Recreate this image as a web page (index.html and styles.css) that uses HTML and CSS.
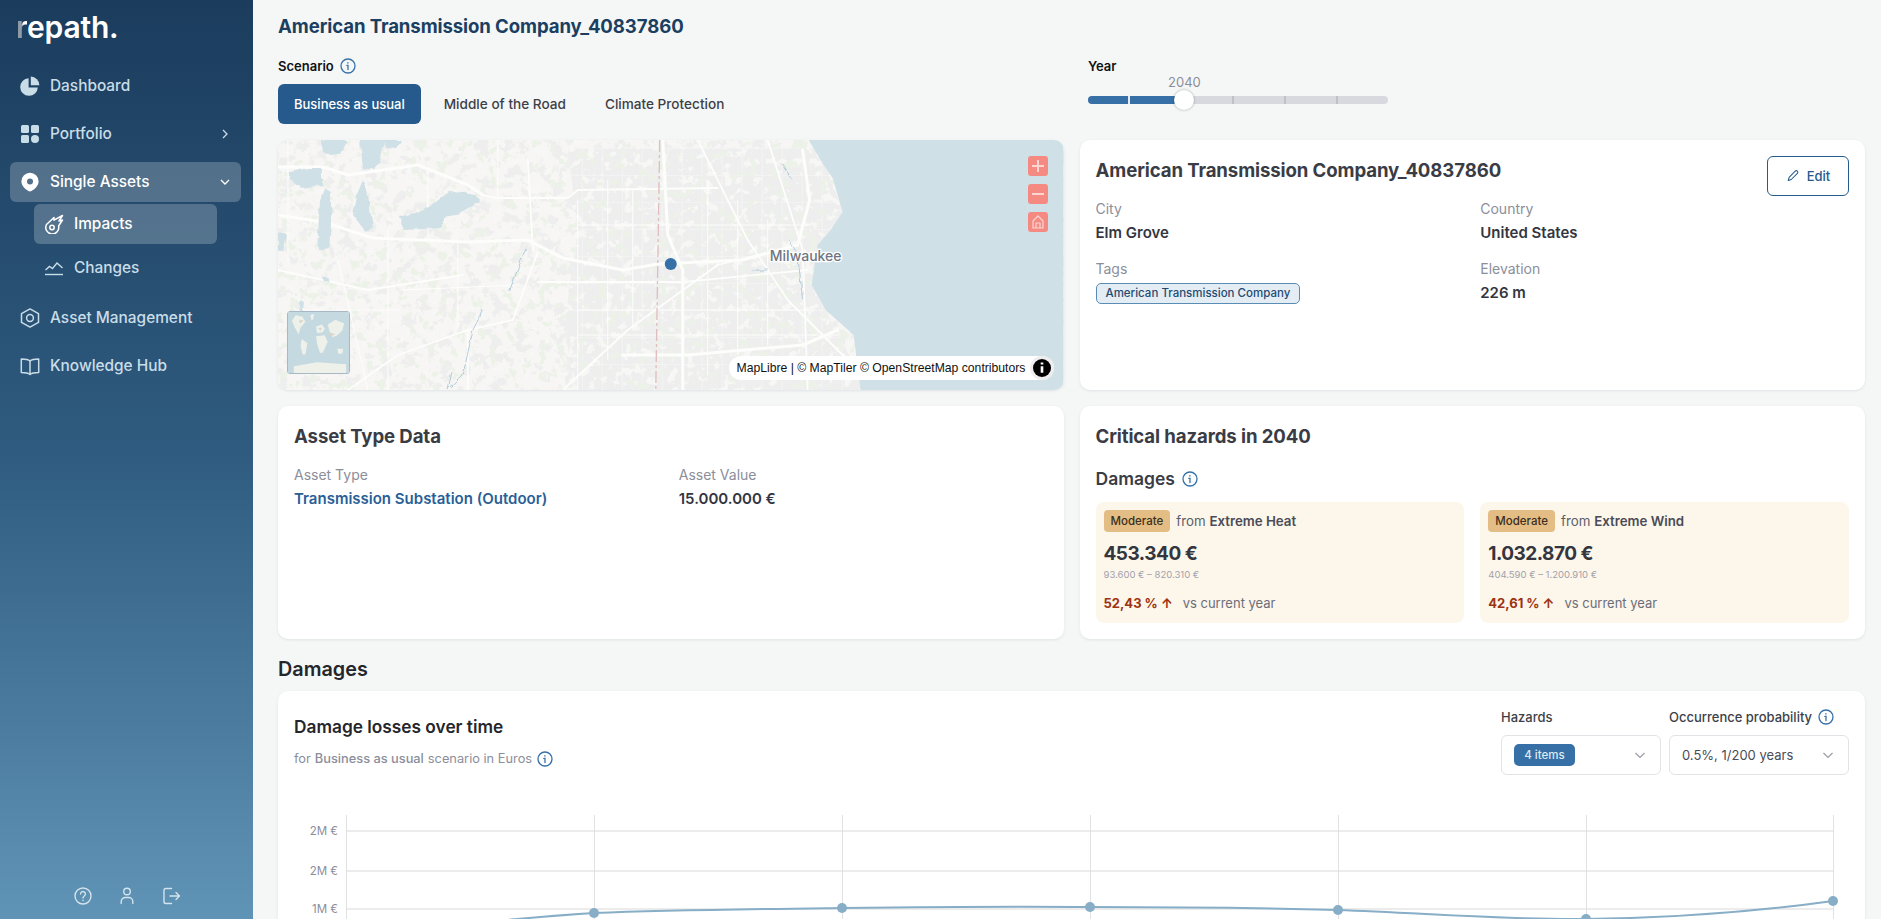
FILE: index.html
```html
<!DOCTYPE html>
<html lang="en">
<head>
<meta charset="utf-8">
<title>repath – Impacts</title>
<link rel="stylesheet" href="styles.css">
</head>
<body>
<aside class="sidebar">
  <div class="logo"><span class="logo-r">r</span>epath.</div>
  <nav class="nav">
    <a class="nav-item">
      <svg class="nav-icon" viewBox="0 0 20 20"><path fill="currentColor" d="M8.600 2.200v9.200h9.200A8.800 8.800 0 1 1 8.600 2.200z"/><path fill="currentColor" d="M10.800.6a8.700 8.700 0 0 1 8.600 8.600h-8.600z"/></svg>
      <span>Dashboard</span>
    </a>
    <a class="nav-item">
      <svg class="nav-icon" viewBox="0 0 20 20"><rect fill="currentColor" x="1" y="1" width="8" height="8" rx="1.500"/><rect fill="currentColor" x="11" y="1" width="8" height="8" rx="1.500"/><rect fill="currentColor" x="1" y="11" width="8" height="8" rx="1.500"/><circle fill="currentColor" cx="15" cy="15" r="4"/></svg>
      <span>Portfolio</span>
      <svg class="nav-chev" viewBox="0 0 12 12"><path d="M4 2l4 4-4 4"/></svg>
    </a>
    <a class="nav-item is-open">
      <svg class="nav-icon" viewBox="0 0 20 20"><path fill="currentColor" fill-rule="evenodd" d="M10 .8a8.600 8.600 0 0 1 8.600 8.600c0 4.600-4.600 8.500-8.600 10.200-4-1.700-8.600-5.600-8.600-10.200A8.600 8.600 0 0 1 10 .8zm0 5.700a3 3 0 1 0 0 6 3 3 0 0 0 0-6z"/></svg>
      <span>Single Assets</span>
      <svg class="nav-chev" viewBox="0 0 12 12"><path d="M2 4l4 4 4-4"/></svg>
    </a>
    <div class="subnav">
      <a class="sub-item is-active">
        <svg class="nav-icon" viewBox="0 0 20 20"><g fill="none" stroke="currentColor" stroke-width="1.500" stroke-linejoin="round"><path d="M2.500 10.500 10 3.500v2.700l8.500-4.700L15 7l3.500-1-3.900 6A6.500 6.500 0 1 1 2.500 10.500z"/><circle cx="8" cy="13.500" r="2.200"/></g></svg>
        <span>Impacts</span>
      </a>
      <a class="sub-item">
        <svg class="nav-icon" viewBox="0 0 20 20"><g fill="none" stroke="currentColor" stroke-width="1.400"><path d="M1.500 12l4-3.500 3 2L13 5l5.500 5"/><path d="M1 16.500h18"/></g></svg>
        <span>Changes</span>
      </a>
    </div>
    <a class="nav-item">
      <svg class="nav-icon" viewBox="0 0 20 20"><g fill="none" stroke="currentColor" stroke-width="1.500" stroke-linejoin="round"><path d="M10 .9l8.500 4.700v8.800L10 19.100l-8.500-4.700V5.600z"/><circle cx="10" cy="10" r="3.400"/></g></svg>
      <span>Asset Management</span>
    </a>
    <a class="nav-item">
      <svg class="nav-icon" viewBox="0 0 20 20"><g fill="none" stroke="currentColor" stroke-width="1.500" stroke-linejoin="round"><path d="M10 5c-1.500-1.500-3.500-2-8.700-2v13.500c5.200 0 7.200.5 8.700 2 1.500-1.500 3.500-2 8.700-2V3C13.500 3 11.500 3.500 10 5z"/><path d="M10 5v13.500"/></g></svg>
      <span>Knowledge Hub</span>
    </a>
  </nav>
  <div class="side-foot">
    <svg class="foot-icon" viewBox="0 0 20 20"><circle cx="10" cy="10" r="8"/><path d="M7.600 8a2.400 2.400 0 1 1 3.700 2c-.9.600-1.300 1-1.300 2"/><path d="M10 14.200v.3"/></svg>
    <svg class="foot-icon" viewBox="0 0 20 20"><circle cx="10" cy="5.500" r="3.300"/><path d="M4.200 17.500v-2a4 4 0 0 1 4-4h3.600a4 4 0 0 1 4 4v2"/></svg>
    <svg class="foot-icon" viewBox="0 0 20 20"><path d="M10.500 2.500H4.800A1.800 1.800 0 0 0 3 4.300v11.400a1.800 1.800 0 0 0 1.800 1.800h5.700M9 10h9.500M15 6.500l3.500 3.500-3.500 3.500"/></svg>
  </div>
</aside>

<main class="main">
  <h1 class="page-title">American Transmission Company_40837860</h1>

  <section class="controls">
    <div class="scenario">
      <div class="ctrl-label">Scenario
        <svg class="info" viewBox="0 0 16 16"><circle cx="8" cy="8" r="7"/><path d="M6.800 7.300H8v4.200"/><path d="M7.900 4.600v.4"/></svg>
      </div>
      <div class="tabs">
        <button class="tab is-active">Business as usual</button>
        <button class="tab">Middle of the Road</button>
        <button class="tab">Climate Protection</button>
      </div>
    </div>
    <div class="year">
      <div class="ctrl-label">Year</div>
      <div class="slider">
        <span class="slider-value">2040</span>
        <div class="track">
          <span class="fill"></span>
          <span class="tick tick-1"></span>
          <span class="tick tick-3"></span>
          <span class="tick tick-4"></span>
          <span class="tick tick-5"></span>
          <span class="thumb"></span>
        </div>
      </div>
    </div>
  </section>

  <section class="grid">
    <div class="card map-card">
      <svg class="map" viewBox="0 0 786 250" preserveAspectRatio="none">
        <defs>
          <filter id="mottleGrey" x="0" y="0" width="100%" height="100%" color-interpolation-filters="sRGB">
            <feTurbulence type="fractalNoise" baseFrequency="0.08" numOctaves="4" seed="7"/>
            <feColorMatrix values="0 0 0 0 0.933  0 0 0 0 0.933  0 0 0 0 0.933  12 0 0 0 -6.300"/>
          </filter>
          <filter id="mottleLight" x="0" y="0" width="100%" height="100%" color-interpolation-filters="sRGB">
            <feTurbulence type="fractalNoise" baseFrequency="0.11" numOctaves="4" seed="33"/>
            <feColorMatrix values="0 0 0 0 0.970  0 0 0 0 0.968  0 0 0 0 0.960  0 0 12 0 -6.900"/>
          </filter>
          <filter id="mottleGreen" x="0" y="0" width="100%" height="100%" color-interpolation-filters="sRGB">
            <feTurbulence type="fractalNoise" baseFrequency="0.1" numOctaves="3" seed="21"/>
            <feColorMatrix values="0 0 0 0 0.925  0 0 0 0 0.950  0 0 0 0 0.910  0 14 0 0 -8.600"/>
          </filter>
          <filter id="wobble" x="-10%" y="-10%" width="120%" height="120%">
            <feTurbulence type="fractalNoise" baseFrequency="0.12" numOctaves="2" seed="5"/>
            <feDisplacementMap in="SourceGraphic" scale="5" xChannelSelector="R" yChannelSelector="G"/>
          </filter>
          <pattern id="blocks" width="20" height="27" patternUnits="userSpaceOnUse" x="284" y="8">
            <rect width="20" height="27" fill="#eeeeee"/>
            <path d="M0 0h20M0 0v27" stroke="#f9f9f8" stroke-width="1.200"/>
          </pattern>
        </defs>
        <rect width="786" height="250" fill="#f7f6f4"/>
        <rect width="786" height="250" filter="url(#mottleGrey)"/>
        <path fill="url(#blocks)" d="M290 8H540L566 72 534 145 590 250H300L286 190 300 90z"/>
        <rect width="786" height="250" filter="url(#mottleLight)"/>
        <rect width="786" height="250" filter="url(#mottleGreen)"/>
        <g fill="none" stroke="#fdfdfc" stroke-linecap="round" stroke-linejoin="round">
          <g stroke-width="3">
            <path d="M0 27H45L70 35 140 25 190 45 205 55"/>
            <path d="M0 75 45 82 95 98 190 102 250 100 285 118 345 130 380 124 465 120 520 105 532 60 525 10"/>
            <path d="M385 0 390 95 405 130 405 250"/>
            <path d="M345 215H410L525 205 560 190"/>
          </g>
          <g stroke-width="1.800">
            <path d="M205 55 218 58 290 58 300 50 440 48"/>
            <path d="M420 0 470 100 510 160 575 225"/>
            <path d="M490 0 525 110 530 250"/>
            <path d="M260 112 235 180 190 190 190 250"/>
            <path d="M0 130 90 150 185 135"/>
            <path d="M190 190 120 215 70 250"/>
            <path d="M285 250 350 190 440 125 520 105"/>
            <path d="M260 142H405L530 130"/>
            <path d="M250 20 255 110"/>
          </g>
          <g stroke-width="1">
            <path d="M10 0V120M110 90V250M180 100V190M220 0V60M20 170H120M150 30V100M60 120 90 250M125 150 240 145M300 60V250M330 40V220M355 50V190M430 40V235M460 60V215M490 80V205M300 85H530M300 170H530M300 195H560"/>
          </g>
        </g>
        <g fill="#cfe0e6" filter="url(#wobble)">
          <path d="M121 77 147 70 162 58 170 51 199 55 201 62 178 75 165 77 165 88 126 90z"/>
          <path d="M11 32 31 28 44 28 44 45 23 48 11 38z"/>
          <path d="M80 52 85 40 90 55 95 88 88 92 75 75z"/>
          <path d="M42 62 46 48 53 52 53 85 51 108 41 110 40 92z"/>
          <path d="M82 0H108L98 30 85 28z"/>
          <path d="M44 0H70L62 15 46 13z"/>
          <path d="M0 93 9 95 5 112 0 110z"/>
          <path d="M44 135 50 137 52 142 46 141z"/>
          <path d="M22 160 26 162 25 172 22 170z"/>
          <path d="M105 0H125L118 8 108 7z"/>
        </g>
        <g fill="none" stroke="#a8c6d6" stroke-width=".9" filter="url(#wobble)">
          <path d="M248 108 232 150M205 170 195 190 185 235 170 250 174 232M505 25 515 40M512 100 520 115 525 160M490 130 475 130"/>
        </g>
        <path fill="#cfe0e6" d="M531 0 546 25 555 38 565 72 553 90 540 105 534 145 548 170 576 195 583 250H786V0z"/>
        <path d="M382 0 378 250" fill="none" stroke="#e0bcbc" stroke-width="1.300" stroke-dasharray="12 3 3 3"/>
        <text class="map-city" x="528" y="121">Milwaukee</text>
        <circle cx="393" cy="124" r="6" fill="#3670a6"/>
      </svg>
      <div class="map-controls">
        <span class="map-btn"><svg viewBox="0 0 20 20"><path d="M4 10h12M10 4v12"/></svg></span>
        <span class="map-btn"><svg viewBox="0 0 20 20"><path d="M4 10h12"/></svg></span>
        <span class="map-btn"><svg viewBox="0 0 20 20"><path class="thin" d="M5 16V9l5-5 5 5v7zM8 16v-5h4v5"/></svg></span>
      </div>
      <div class="minimap">
        <svg viewBox="0 0 63 63" preserveAspectRatio="none">
          <rect width="63" height="63" fill="#c5d9e0"/>
          <g fill="#eef0ea">
            <path d="M8 3 15 5 18 10 13 16 11 23 7 16 4 9z"/>
            <path d="M14 28 20 32 18 44 15 44 13 35z"/>
            <path d="M29 15 35 13 38 17 36 21 30 22z"/>
            <path d="M29 25 38 24 41 31 36 42 33 42 30 33z"/>
            <path d="M41 13 49 8 58 12 56 19 51 24 46 26 43 20z"/>
            <path d="M51 38 57 38 56 43 52 43z"/>
            <path d="M6 56 30 52 60 54V63H6z"/>
            <path d="M23 3 27 2 26 8 24 8z"/>
          </g>
          <path fill="#d9d4ca" d="M42 21 49 23 44 25zM31 17 35 16 34 19zM16 8 13 12 11 9z"/>
        </svg>
      </div>
      <div class="attrib">
        <span>MapLibre | © MapTiler © OpenStreetMap contributors</span>
        <span class="attrib-i"><svg viewBox="0 0 20 20"><circle cx="10" cy="10" r="7.500" fill="#000"/><path d="M10 8.500v5.500M10 5.500v1.500" stroke="#fff" stroke-width="2.200"/></svg></span>
      </div>
    </div>

    <div class="card info-card">
      <div class="card-head">
        <h2 class="card-title">American Transmission Company_40837860</h2>
        <button class="edit-btn">
          <svg viewBox="0 0 16 16"><path d="M10.500 2.500a1.700 1.700 0 0 1 2.500 2.400L6 12l-3.500 1.200L3.600 9.600z"/></svg>
          Edit
        </button>
      </div>
      <div class="fields">
        <div class="field"><div class="f-label">City</div><div class="f-value">Elm Grove</div></div>
        <div class="field"><div class="f-label">Country</div><div class="f-value">United States</div></div>
        <div class="field"><div class="f-label">Tags</div><span class="tag">American Transmission Company</span></div>
        <div class="field"><div class="f-label">Elevation</div><div class="f-value">226 m</div></div>
      </div>
    </div>

    <div class="card asset-card">
      <h2 class="card-title">Asset Type Data</h2>
      <div class="fields asset-fields">
        <div class="field"><div class="f-label">Asset Type</div><div class="f-value link">Transmission Substation (Outdoor)</div></div>
        <div class="field"><div class="f-label">Asset Value</div><div class="f-value">15.000.000 €</div></div>
      </div>
    </div>

    <div class="card hazard-card">
      <h2 class="card-title">Critical hazards in 2040</h2>
      <h3 class="sub-title">Damages
        <svg class="info" viewBox="0 0 16 16"><circle cx="8" cy="8" r="7"/><path d="M6.800 7.300H8v4.200"/><path d="M7.900 4.600v.4"/></svg>
      </h3>
      <div class="hazards">
        <div class="hazard">
          <div class="hz-top"><span class="badge">Moderate</span><span class="hz-from">from <b>Extreme Heat</b></span></div>
          <div class="hz-value">453.340 €</div>
          <div class="hz-range">93.600 € – 820.310 €</div>
          <div class="hz-delta"><b>52,43 % ↑</b><span>vs current year</span></div>
        </div>
        <div class="hazard">
          <div class="hz-top"><span class="badge">Moderate</span><span class="hz-from">from <b>Extreme Wind</b></span></div>
          <div class="hz-value">1.032.870 €</div>
          <div class="hz-range">404.590 € – 1.200.910 €</div>
          <div class="hz-delta"><b>42,61 % ↑</b><span>vs current year</span></div>
        </div>
      </div>
    </div>
  </section>

  <h2 class="section-title">Damages</h2>

  <section class="card chart-card">
    <div class="chart-head">
      <div class="chart-titles">
        <h3 class="chart-title">Damage losses over time</h3>
        <p class="chart-sub">for <b>Business as usual</b> scenario in Euros
          <svg class="info" viewBox="0 0 16 16"><circle cx="8" cy="8" r="7"/><path d="M6.800 7.300H8v4.200"/><path d="M7.900 4.600v.4"/></svg>
        </p>
      </div>
      <div class="filters">
        <div class="filter filter-hazards">
          <div class="filter-label">Hazards</div>
          <div class="select"><span class="chip">4 items</span>
            <svg class="sel-chev" viewBox="0 0 12 12"><path d="M1.500 4l4.500 4.500L10.500 4"/></svg></div>
        </div>
        <div class="filter filter-prob">
          <div class="filter-label">Occurrence probability
            <svg class="info" viewBox="0 0 16 16"><circle cx="8" cy="8" r="7"/><path d="M6.800 7.300H8v4.200"/><path d="M7.900 4.600v.4"/></svg></div>
          <div class="select"><span>0.5%, 1/200 years</span>
            <svg class="sel-chev" viewBox="0 0 12 12"><path d="M1.500 4l4.500 4.500L10.500 4"/></svg></div>
        </div>
      </div>
    </div>
    <svg class="chart" viewBox="0 0 1555 119" width="1555" height="119">
      <g stroke="#ececec" stroke-width="2">
        <path d="M52 31H1539M52 71H1539M52 109H1539"/>
      </g>
      <g stroke="#dfe1e3" stroke-width="1">
        <path d="M52.500 15V119M300.500 15V119M548.500 15V119M796.500 15V119M1044.500 15V119M1292.500 15V119M1539.500 15V119"/>
      </g>
      <g class="axis-text">
        <text x="44" y="35">2M €</text>
        <text x="44" y="75">2M €</text>
        <text x="44" y="113">1M €</text>
      </g>
      <path d="M52 137C130 128 220 118 300 113C380 110 470 109 548 108C630 107 720 106 796 107C880 107 970 108 1044 110C1130 113 1210 120 1292 119C1380 118 1460 112 1539 101" fill="none" stroke="#87aec6" stroke-width="2"/>
      <g fill="#87aec6">
        <circle cx="300" cy="113" r="5"/><circle cx="548" cy="108" r="5"/><circle cx="796" cy="107" r="5"/><circle cx="1044" cy="110" r="5"/><circle cx="1292" cy="119" r="5"/><circle cx="1539" cy="101" r="5"/>
      </g>
    </svg>
  </section>
</main>
</body>
</html>
```

FILE: styles.css
```css
* { box-sizing: border-box; }
html, body { margin: 0; height: 100%; }
body {
  display: flex;
  height: 100vh;
  overflow: hidden;
  font-family: "Inter", "Noto Sans", sans-serif;
  background: #f5f7f7;
  color: #34363f;
}

/* Sidebar */
.sidebar {
  flex: 0 0 253px;
  display: flex;
  flex-direction: column;
  background: linear-gradient(180deg, #1b3c5d 0%, #2f5c80 50%, #6094b6 100%);
  color: #c9dde8;
}
.logo {
  height: 56px;
  padding: 7px 0 0 16px;
  font-size: 30px;
  line-height: 40px;
  font-weight: 600;
  letter-spacing: -0.2px;
  color: #fff;
}
.logo-r {
  background: linear-gradient(90deg, #8f9ba7 0 50%, #fff 70%);
  -webkit-background-clip: text;
  background-clip: text;
  color: transparent;
}
.nav { display: flex; flex-direction: column; padding: 10px 12px 0 10px; }
.nav-item {
  display: flex;
  align-items: center;
  gap: 10px;
  height: 40px;
  padding: 0 10px 1px;
  margin-bottom: 8px;
  border-radius: 6px;
  font-size: 15.400px;
  font-weight: 500;
}
.nav-item.is-open {
  margin-bottom: 2px;
  background: rgba(255, 255, 255, .22);
  color: #fff;
}
.nav-icon { width: 20px; height: 20px; flex: none; }
.nav-chev {
  width: 12px;
  height: 12px;
  margin-left: auto;
  fill: none;
  stroke: currentColor;
  stroke-width: 1.300;
}
.subnav {
  display: flex;
  flex-direction: column;
  gap: 4px;
  margin: 0 24px 10px 24px;
}
.sub-item {
  display: flex;
  align-items: center;
  gap: 10px;
  height: 40px;
  padding: 0 10px 1px;
  border-radius: 6px;
  font-size: 15.400px;
  font-weight: 500;
}
.sub-item.is-active { background: rgba(255, 255, 255, .22); color: #fff; }
.side-foot {
  margin-top: auto;
  display: flex;
  justify-content: center;
  gap: 24px;
  padding-bottom: 13px;
}
.foot-icon {
  width: 20px;
  height: 20px;
  fill: none;
  stroke: #d4e3ec;
  stroke-width: 1.400;
  stroke-linecap: round;
  stroke-linejoin: round;
}

/* Main */
.main {
  flex: 1;
  min-width: 0;
  padding: 14px 16px 0 25px;
  overflow: hidden;
}
.page-title {
  margin: 0;
  font-size: 18.600px;
  line-height: 24px;
  font-weight: 700;
  letter-spacing: -0.1px;
  color: #1b3f60;
}
.controls { display: flex; margin-top: 18px; }
.scenario { flex: 0 0 810px; }
.ctrl-label {
  display: flex;
  align-items: center;
  gap: 6px;
  height: 20px;
  font-size: 13px;
  font-weight: 600;
  color: #111;
}
.info {
  width: 16px;
  height: 16px;
  flex: none;
  fill: none;
  stroke: #3670a6;
  stroke-width: 1.300;
  stroke-linecap: round;
  vertical-align: -3px;
}
.tabs { display: flex; gap: 7px; margin-top: 8px; }
.tab {
  height: 40px;
  padding: 0 16px;
  border: 0;
  border-radius: 6px;
  background: none;
  font: 500 13.600px "Inter", sans-serif;
  color: #3d3f48;
}
.tab.is-active { background: #265a8c; color: #fff; font-size: 13px; }
.year { flex: 0 0 300px; }
.slider { position: relative; height: 32px; }
.slider-value {
  position: absolute;
  left: 80px;
  top: 0;
  font-size: 13px;
  line-height: 12px;
  color: #8b8e9b;
}
.slider .track {
  position: absolute;
  left: 0;
  right: 0;
  top: 20px;
  height: 8px;
  border-radius: 4px;
  background: #d8d9df;
}
.fill {
  position: absolute;
  left: 0;
  top: 0;
  bottom: 0;
  width: 96px;
  border-radius: 4px 0 0 4px;
  background: #3670a6;
}
.tick { position: absolute; top: 0; bottom: 0; width: 2px; background: #bfc1c9; }
.tick-1 { left: 40px; background: #e6ebf0; }
.tick-3 { left: 144px; }
.tick-4 { left: 196px; }
.tick-5 { left: 248px; }
.thumb {
  position: absolute;
  left: 86px;
  top: -6px;
  width: 20px;
  height: 20px;
  border-radius: 50%;
  background: #fff;
  box-shadow: 0 0 3px rgba(0, 0, 0, .3);
}

/* Cards */
.grid {
  display: grid;
  grid-template-columns: 1fr 1fr;
  grid-template-rows: 250px 233px;
  gap: 16px;
  margin-top: 16px;
}
.card {
  background: #fff;
  border-radius: 10px;
  box-shadow: 0 1px 3px rgba(30, 50, 70, .1);
  padding: 16px;
}
.map-card { position: relative; padding: 0; overflow: hidden; }
.map { display: block; width: 100%; height: 100%; }
.map-city {
  font: 500 14px "Inter", sans-serif;
  fill: #6d7583;
  text-anchor: middle;
  stroke: #fff;
  stroke-width: 2.500;
  paint-order: stroke;
}
.map-controls {
  position: absolute;
  top: 16px;
  right: 16px;
  display: flex;
  flex-direction: column;
  gap: 8px;
}
.map-btn {
  display: block;
  width: 20px;
  height: 20px;
  border-radius: 3px;
  background: #f58a83;
}
.map-btn svg {
  display: block;
  width: 20px;
  height: 20px;
  fill: none;
  stroke: #fbd6d2;
  stroke-width: 2;
}
.map-btn .thin { stroke-width: 1.200; stroke-linejoin: round; }
.minimap {
  position: absolute;
  left: 9px;
  top: 171px;
  width: 63px;
  height: 63px;
  border: 1px solid #a9b8c4;
  border-radius: 3px;
  overflow: hidden;
}
.minimap svg { display: block; width: 100%; height: 100%; }
.attrib {
  position: absolute;
  right: 10px;
  bottom: 10px;
  display: flex;
  align-items: center;
  justify-content: space-between;
  width: 325px;
  height: 24px;
  padding-left: 8px;
  border-radius: 12px;
  background: #fff;
  font: 12.200px/24px "Liberation Sans", sans-serif;
  color: #111;
  white-space: nowrap;
}
.attrib-i {
  display: block;
  width: 24px;
  height: 24px;
  border-radius: 50%;
  background: #eee;
}
.attrib-i svg { display: block; width: 24px; height: 24px; }

.card-head { display: flex; justify-content: space-between; align-items: flex-start; height: 40px; }
.card-title {
  margin: 0;
  font-size: 18.600px;
  line-height: 28px;
  font-weight: 700;
  letter-spacing: -0.1px;
  color: #3a3c45;
}
.edit-btn {
  display: flex;
  align-items: center;
  justify-content: center;
  gap: 7px;
  width: 82px;
  height: 40px;
  border: 1px solid #265a8c;
  border-radius: 6px;
  background: #fff;
  font: 500 13px "Inter", sans-serif;
  color: #265a8c;
}
.edit-btn svg {
  width: 14px;
  height: 14px;
  fill: none;
  stroke: #265a8c;
  stroke-width: 1.200;
  stroke-linejoin: round;
}
.fields {
  display: grid;
  grid-template-columns: 1fr 1fr;
  column-gap: 16px;
  row-gap: 16px;
  margin-top: 3px;
}
.asset-fields { margin-top: 15px; }
.f-label { font-size: 14px; line-height: 20px; color: #8b8e9b; }
.f-value {
  margin-top: 4px;
  font-size: 15px;
  line-height: 20px;
  font-weight: 600;
  color: #34363f;
}
.f-value.link { color: #2a6096; }
.tag {
  display: inline-block;
  margin-top: 4px;
  height: 21px;
  padding: 0 9px;
  border: 1px solid #5a8db5;
  border-radius: 5px;
  background: #e4edf3;
  font-size: 11.500px;
  line-height: 19px;
  font-weight: 500;
  color: #1f4a72;
}
.sub-title {
  display: flex;
  align-items: center;
  gap: 7px;
  margin: 17px 0 0;
  font-size: 17.500px;
  line-height: 24px;
  font-weight: 600;
  color: #3a3c46;
}
.hazards { display: grid; grid-template-columns: 1fr 1fr; gap: 16px; margin-top: 11px; }
.hazard {
  height: 121px;
  padding: 8px;
  border-radius: 8px;
  background: #fdf6ea;
}
.hz-top { display: flex; align-items: center; gap: 6px; height: 22px; }
.badge {
  height: 22px;
  padding: 0 7px;
  border-radius: 4px;
  background: #e3bd84;
  font-size: 11.500px;
  line-height: 22px;
  font-weight: 500;
  color: #3a2f20;
}
.hz-from { font-size: 13.300px; color: #5c5f6b; }
.hz-from b { font-weight: 600; color: #4a4c57; }
.hz-value {
  margin-top: 10px;
  font-size: 19px;
  line-height: 24px;
  font-weight: 700;
  letter-spacing: -0.5px;
  color: #34363f;
}
.hz-range { margin-top: 3px; font-size: 9.500px; line-height: 12px; color: #a0a2ad; }
.hz-delta { display: flex; gap: 10px; margin-top: 12px; font-size: 13px; line-height: 20px; color: #6b6e7a; }
.hz-delta b { font-weight: 700; color: #9c3312; }

.section-title {
  margin: 18px 0 10px;
  font-size: 19.800px;
  line-height: 24px;
  font-weight: 600;
  color: #25262c;
}
.chart-card { height: 300px; }
.chart-head { display: flex; justify-content: space-between; }
.chart-titles { padding-top: 8px; }
.chart-title {
  margin: 0;
  font-size: 17.300px;
  line-height: 24px;
  font-weight: 600;
  color: #25262c;
}
.chart-sub {
  display: flex;
  align-items: center;
  gap: 5px;
  margin: 10px 0 0;
  font-size: 12.800px;
  line-height: 20px;
  color: #8b8e9b;
}
.chart-sub b { font-weight: 500; margin: 0 -1px; }
.filters { display: flex; gap: 8px; }
.filter-hazards { width: 160px; }
.filter-prob { width: 180px; }
.filter-label {
  display: flex;
  align-items: center;
  gap: 6px;
  height: 20px;
  font-size: 13px;
  font-weight: 500;
  color: #3d3f48;
  white-space: nowrap;
}
.select {
  display: flex;
  align-items: center;
  justify-content: space-between;
  height: 40px;
  margin-top: 8px;
  padding: 0 14px 0 12px;
  border: 1px solid #e2e3e6;
  border-radius: 6px;
  font-size: 13px;
  color: #4a4c57;
  white-space: nowrap;
}
.chip {
  width: 61px;
  height: 22px;
  border-radius: 5px;
  background: #3670a6;
  font-size: 11.500px;
  font-weight: 500;
  line-height: 22px;
  text-align: center;
  color: #dfeaf2;
}
.sel-chev {
  width: 12px;
  height: 12px;
  fill: none;
  stroke: #9a9ca6;
  stroke-width: 1.200;
}
.chart { display: block; margin-top: 25px; }
.axis-text text {
  font: 11.500px "Inter", sans-serif;
  fill: #8b8e9b;
  text-anchor: end;
}
```
